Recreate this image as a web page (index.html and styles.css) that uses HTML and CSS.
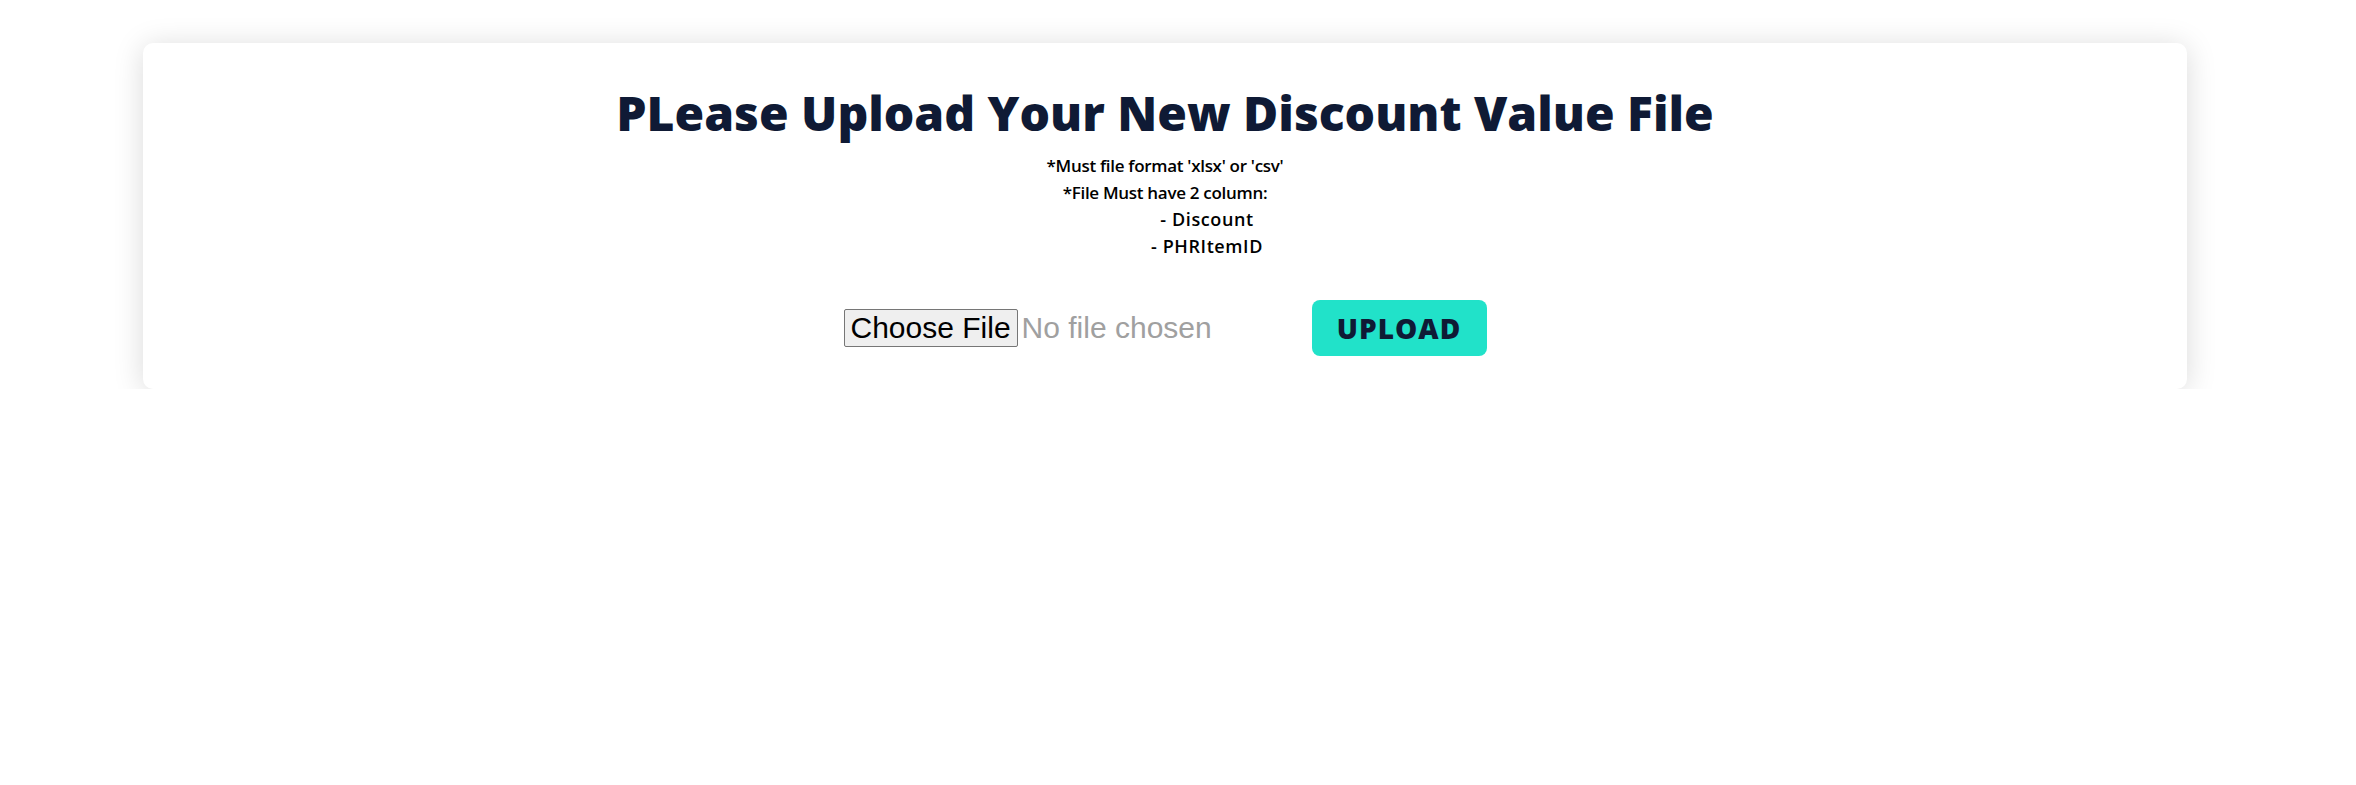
FILE: index.html
```html
<!DOCTYPE html>
<html lang="en">
<head>
<meta charset="utf-8">
<title>Upload Discount File</title>
<link rel="stylesheet" href="styles.css">
</head>
<body>
<div class="page">
  <div class="card">
    <h1 class="title">PLease Upload Your New Discount Value File</h1>
    <div class="notes">
      <p class="note">*Must file format 'xlsx' or 'csv'</p>
      <p class="note">*File Must have 2 column:</p>
      <p class="note note-item">- Discount</p>
      <p class="note note-item">- PHRItemID</p>
    </div>
    <form class="upload-row">
      <input class="file-input" type="file" accept=".xlsx,.csv">
      <button class="upload-btn" type="button">UPLOAD</button>
    </form>
  </div>
</div>
</body>
</html>
```

FILE: styles.css
```css
html, body {
  margin: 0;
  padding: 0;
  background: #ffffff;
}

.page {
  padding: 43px 0 0 143px;
}

.card {
  box-sizing: border-box;
  width: 2044px;
  height: 346px;
  background: #ffffff;
  border-radius: 10px;
  box-shadow: 0 3px 30px rgba(0, 0, 0, 0.15);
  padding-top: 40px;
  display: flex;
  flex-direction: column;
  align-items: center;
  font-family: "Open Sans", "Noto Sans", sans-serif;
}

.title {
  margin: 0;
  font-size: 48px;
  line-height: 60px;
  font-weight: 800;
  color: #0f1a35;
  letter-spacing: 0;
}

.notes {
  margin-top: 9px;
  display: flex;
  flex-direction: column;
  align-items: center;
}

.note {
  margin: 0;
  font-size: 17px;
  line-height: 27px;
  font-weight: 600;
  color: #000000;
  letter-spacing: -0.3px;
}

.note-item {
  padding-left: 84px;
  font-size: 18px;
  letter-spacing: 0.6px;
}

.upload-row {
  margin-top: 40px;
  display: flex;
  align-items: center;
  gap: 46px;
}

.file-input {
  width: 422px;
  font-family: "Liberation Sans", Arial, sans-serif;
  font-size: 30px;
  color: #a0a0a0;
}

.file-input::file-selector-button {
  font-family: "Liberation Sans", Arial, sans-serif;
  font-size: 30px;
  color: #000000;
  background: #efefef;
  border: 1px solid #767676;
  border-radius: 2px;
  padding: 1px 6px;
  margin-right: 4px;
}

.upload-btn {
  width: 175px;
  height: 56px;
  border: none;
  border-radius: 8px;
  background: #21e2c9;
  color: #0f1a35;
  font-family: "Open Sans", "Noto Sans", sans-serif;
  font-weight: 800;
  font-size: 28px;
  letter-spacing: 1px;
  cursor: pointer;
}
```
